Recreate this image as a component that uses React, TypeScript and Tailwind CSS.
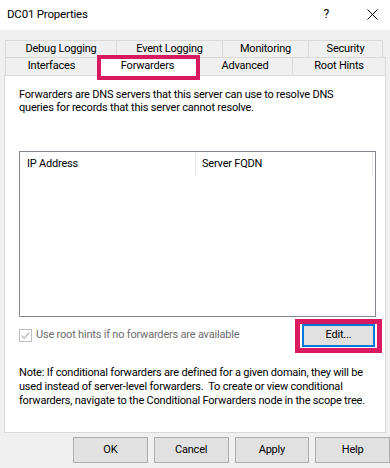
const font = { fontFamily: "Roboto, 'Liberation Sans', Arial, sans-serif" };

const topTabs = [
  { label: "Debug Logging", w: "w-[112px]" },
  { label: "Event Logging", w: "w-[107px]" },
  { label: "Monitoring", w: "w-[87px]" },
  { label: "Security", w: "w-[75px]" },
];

function Tab({ label, w }: { label: string; w: string }) {
  return (
    <div
      className={`${w} h-full flex items-center justify-center border-t border-l border-r border-[#d9d9d9] bg-[#f0f0f0] -mr-px last:mr-0`}
    >
      {label}
    </div>
  );
}

function DialogButton({ label }: { label: string }) {
  return (
    <button className="w-[75px] h-[26px] bg-[#e1e1e1] border border-[#adadad] text-black flex items-center justify-center">
      {label}
    </button>
  );
}

export default function App() {
  return (
    <div
      className="w-[390px] h-[468px] bg-[#f0f0f0] overflow-hidden text-[11px] tracking-[-0.2px] text-black whitespace-nowrap"
      style={font}
    >
      {/* title bar */}
      <div className="h-[30px] bg-white flex items-center">
        <span className="ml-[7px] text-[11.5px]">DC01 Properties</span>
        <span className="ml-auto mr-[38px] text-[12px] -mt-[2px]">?</span>
        <svg width="11" height="11" viewBox="0 0 11 11" className="mr-[12px] -mt-[2px]">
          <path d="M0.5 0.5 L10.5 10.5 M10.5 0.5 L0.5 10.5" stroke="#000" strokeWidth="1" />
        </svg>
      </div>

      {/* tabs */}
      <div className="mt-[10px] ml-[5px] w-[381px]">
        <div className="flex h-[17px]">
          {topTabs.map((t) => (
            <Tab key={t.label} {...t} />
          ))}
        </div>
        <div className="flex items-start h-[18px]">
          <Tab label="Interfaces" w="w-[93px]" />
          <div className="relative z-10 w-[101px] h-[21px] -mt-[2px] -mr-px bg-white border-t border-l border-r border-[#d9d9d9] flex justify-center pt-[2px]">
            Forwarders
            <div className="absolute left-[-1px] top-[-1px] w-[103px] h-[25px] border-[4px] border-[#d81b60]" />
          </div>
          <Tab label="Advanced" w="w-[96px]" />
          <Tab label="Root Hints" w="w-[94px]" />
        </div>
      </div>

      {/* panel */}
      <div className="ml-[4px] w-[382px] h-[358px] bg-white border border-[#d9d9d9] pl-[14px] pr-[9px] pt-[12px]">
        <p className="leading-[13px]">
          Forwarders are DNS servers that this server can use to resolve DNS
          <br />
          queries for records that this server cannot resolve.
        </p>

        <div className="mt-[37px] h-[166px] border border-[#828790]">
          <div className="flex h-[24px]">
            <div className="w-[176px] border-r border-[#e5e5e5] pl-[7px] flex items-center">
              IP Address
            </div>
            <div className="w-[177px] border-r border-[#e5e5e5] pl-[6px] flex items-center">
              Server FQDN
            </div>
          </div>
        </div>

        <div className="mt-[7px] h-[23px] flex items-center">
          <div className="w-[13px] h-[13px] border border-[#bcbcbc] flex items-center justify-center">
            <svg width="11" height="11" viewBox="0 0 11 11">
              <path d="M1.5 5.5 L4.2 8.2 L9.5 2.5" fill="none" stroke="#bcbcbc" strokeWidth="1.3" />
            </svg>
          </div>
          <span className="ml-[4px] text-[#6d6d6d]">Use root hints if no forwarders are available</span>
          <div className="relative ml-auto mr-[1px]">
            <button className="w-[73px] h-[23px] bg-[#e1e1e1] border-2 border-[#0078d7] flex items-center justify-center">
              Edit...
            </button>
            <div className="absolute -left-[7px] -top-[5px] w-[87px] h-[34px] border-[5px] border-[#d81b60]" />
          </div>
        </div>

        <p className="mt-[19px] leading-[14px]">
          Note: If conditional forwarders are defined for a given domain, they will be
          <br />
          used instead of server-level forwarders.&nbsp; To create or view conditional
          <br />
          forwarders, navigate to the Conditional Forwarders node in the scope tree.
        </p>
      </div>

      {/* dialog buttons */}
      <div className="mt-[4px] ml-[73px] flex gap-[6px]">
        <DialogButton label="OK" />
        <DialogButton label="Cancel" />
        <DialogButton label="Apply" />
        <DialogButton label="Help" />
      </div>
    </div>
  );
}
